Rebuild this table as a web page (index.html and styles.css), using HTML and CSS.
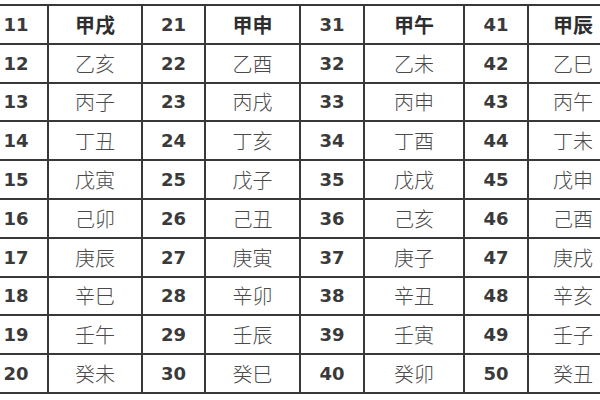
FILE: index.html
```html
<!DOCTYPE html>
<html lang="zh">
<head>
<meta charset="utf-8">
<title>六十甲子</title>
<link rel="stylesheet" href="styles.css">
</head>
<body>
<table class="jiazi">
  <colgroup>
    <col class="c-num"><col class="c-gz1">
    <col class="c-num2"><col class="c-gz2">
    <col class="c-num"><col class="c-gz3">
    <col class="c-num"><col class="c-gz4">
  </colgroup>
  <tbody>
    <tr class="head"><td class="n">11</td><td class="g">甲戌</td><td class="n">21</td><td class="g">甲申</td><td class="n">31</td><td class="g">甲午</td><td class="n">41</td><td class="g">甲辰</td></tr>
    <tr><td class="n">12</td><td class="g">乙亥</td><td class="n">22</td><td class="g">乙酉</td><td class="n">32</td><td class="g">乙未</td><td class="n">42</td><td class="g">乙巳</td></tr>
    <tr><td class="n">13</td><td class="g">丙子</td><td class="n">23</td><td class="g">丙戌</td><td class="n">33</td><td class="g">丙申</td><td class="n">43</td><td class="g">丙午</td></tr>
    <tr><td class="n">14</td><td class="g">丁丑</td><td class="n">24</td><td class="g">丁亥</td><td class="n">34</td><td class="g">丁酉</td><td class="n">44</td><td class="g">丁未</td></tr>
    <tr><td class="n">15</td><td class="g">戊寅</td><td class="n">25</td><td class="g">戊子</td><td class="n">35</td><td class="g">戊戌</td><td class="n">45</td><td class="g">戊申</td></tr>
    <tr><td class="n">16</td><td class="g">己卯</td><td class="n">26</td><td class="g">己丑</td><td class="n">36</td><td class="g">己亥</td><td class="n">46</td><td class="g">己酉</td></tr>
    <tr><td class="n">17</td><td class="g">庚辰</td><td class="n">27</td><td class="g">庚寅</td><td class="n">37</td><td class="g">庚子</td><td class="n">47</td><td class="g">庚戌</td></tr>
    <tr><td class="n">18</td><td class="g">辛巳</td><td class="n">28</td><td class="g">辛卯</td><td class="n">38</td><td class="g">辛丑</td><td class="n">48</td><td class="g">辛亥</td></tr>
    <tr><td class="n">19</td><td class="g">壬午</td><td class="n">29</td><td class="g">壬辰</td><td class="n">39</td><td class="g">壬寅</td><td class="n">49</td><td class="g">壬子</td></tr>
    <tr><td class="n">20</td><td class="g">癸未</td><td class="n">30</td><td class="g">癸巳</td><td class="n">40</td><td class="g">癸卯</td><td class="n">50</td><td class="g">癸丑</td></tr>
  </tbody>
</table>
</body>
</html>
```

FILE: styles.css
```css
html, body {
  margin: 0;
  padding: 0;
  background: #ffffff;
  overflow: hidden;
}

.jiazi {
  margin: 4px 0 0 -17px;
  border-collapse: collapse;
  table-layout: fixed;
  width: 636px;
}

.c-num { width: 64px; }
.c-num2 { width: 63px; }
.c-gz1 { width: 94px; }
.c-gz2 { width: 95px; }
.c-gz3 { width: 100px; }
.c-gz4 { width: 90px; }

.jiazi td {
  border: 2px solid #383838;
  height: 38.8px;
  padding: 0;
  text-align: center;
  vertical-align: middle;
  box-sizing: border-box;
}

.jiazi td.n {
  font-family: "DejaVu Sans", Verdana, sans-serif;
  font-weight: bold;
  font-size: 18px;
  color: #3a3a3a;
}

.jiazi td.g {
  font-family: "Noto Sans CJK SC", "Noto Sans CJK TC", sans-serif;
  font-weight: 300;
  font-size: 20px;
  color: #4a4a4a;
}

.jiazi tr.head td.g {
  font-weight: bold;
  color: #2e2e2e;
}
```
